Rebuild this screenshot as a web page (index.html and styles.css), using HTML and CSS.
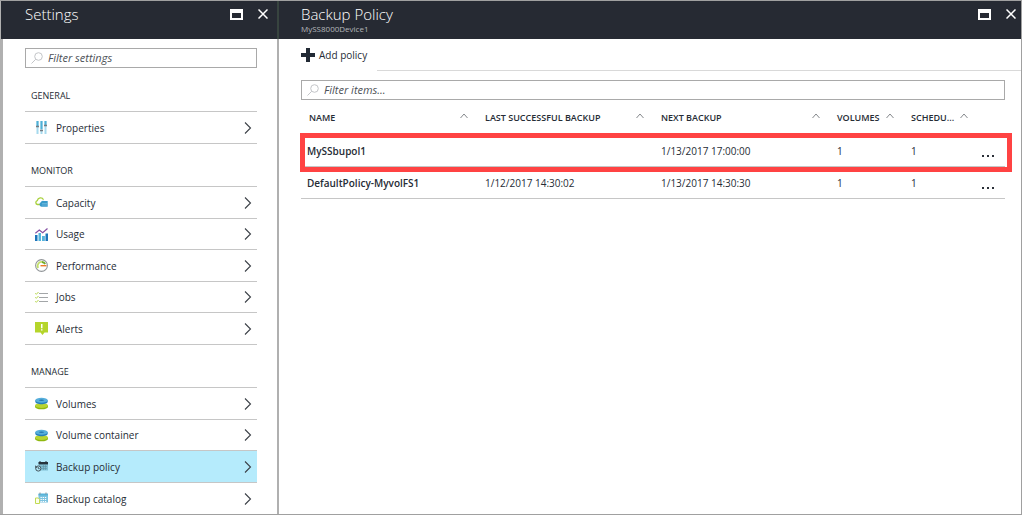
FILE: index.html
```html
<!DOCTYPE html>
<html lang="en">
<head>
<meta charset="utf-8">
<title>Backup Policy</title>
<link rel="stylesheet" href="styles.css">
</head>
<body>
<svg class="sprite" aria-hidden="true">
  <symbol id="chevron" viewBox="0 0 8 12"><path d="M1 .5 6.500 6 1 11.500" fill="none" stroke="#3c4148" stroke-width="1.100"/></symbol>
  <symbol id="sort" viewBox="0 0 8 6"><path d="M.5 5 4 1l3.500 4" fill="none" stroke="#85888c"/></symbol>
  <symbol id="search" viewBox="0 0 12 12"><circle cx="7.500" cy="4.500" r="3.800" fill="none" stroke="#c3c5c8"/><path d="M4.700 7.300.5 11.500" stroke="#c3c5c8"/></symbol>
  <symbol id="restore" viewBox="0 0 13 11"><path d="M0 0h13v11H0zM2 4v5h9V4z" fill="#fff" fill-rule="evenodd"/></symbol>
  <symbol id="close" viewBox="0 0 10 10"><path d="m.5.5 9 9m0-9-9 9" stroke="#fff" stroke-width="1.500"/></symbol>
  <symbol id="disks" viewBox="0 0 13 13">
    <path d="M0 8.500h13v1.200c0 1.500-3 2.600-6.500 2.600S0 11.200 0 9.700z" fill="#8fb80f"/>
    <ellipse cx="6.500" cy="8.600" rx="6.500" ry="2.500" fill="#b8d432"/>
    <path d="M.3 3.200h12.400v1.500c0 1.400-2.800 2.500-6.200 2.500S.3 6.100.3 4.700z" fill="#2580bd"/>
    <ellipse cx="6.500" cy="3.200" rx="6.200" ry="2.500" fill="#56aedb"/>
    <ellipse cx="6.500" cy="3.200" rx="2.500" ry=".8" fill="#2878af"/>
  </symbol>
</svg>
<div class="portal">
  <aside class="blade blade-settings">
    <header class="blade-header">
      <h1 class="title">Settings</h1>
      <div class="window-buttons">
        <button aria-label="Maximize"><svg width="13" height="11"><use href="#restore"/></svg></button>
        <button aria-label="Close"><svg width="10" height="10"><use href="#close"/></svg></button>
      </div>
    </header>
    <div class="settings-body">
      <label class="filter"><svg width="12" height="12"><use href="#search"/></svg><input type="text" placeholder="Filter settings" aria-label="Filter settings"></label>
      <h2 class="group-title">GENERAL</h2>
      <ul class="menu">
        <li><a href="#"><svg class="icon" viewBox="0 0 13 13"><path d="M2.500 0v13M6.500 0v13M10.500 0v13" stroke="#a6daee" stroke-width="2"/><path d="M2.500 0v5M6.500 0v8M10.500 0v4" stroke="#4fb0d6" stroke-width="2"/><path d="M1 5.500h3M5 9.500h3M9 4.500h3" stroke="#747a80" stroke-width="1.500"/></svg><span>Properties</span><svg class="chevron"><use href="#chevron"/></svg></a></li>
      </ul>
      <h2 class="group-title">MONITOR</h2>
      <ul class="menu">
        <li><a href="#"><svg class="icon" viewBox="0 0 13 13"><path d="M5 8.500H2.500A2 2 0 0 1 2.300 4.600 3.300 3.300 0 0 1 8.500 3.800" fill="none" stroke="#a9d13c" stroke-width="1.300"/><path d="M6.500 10.800a2.400 2.400 0 0 1-1-4.300A3 3 0 0 1 9 5h3.700v5.800z" fill="#3a9bcb"/><path d="M7 7.500h5M7 9h5" stroke="#8fcbe6" stroke-width=".5"/></svg><span>Capacity</span><svg class="chevron"><use href="#chevron"/></svg></a></li>
        <li><a href="#"><svg class="icon" viewBox="0 0 13 13"><path d="M0 7h2.500v6H0zM7 8h2.500v5H7z" fill="#1c75bb"/><path d="M3.500 5H6v8H3.500z" fill="#53b5dc"/><path d="M10.500 5.500H13V13h-2.500z" fill="#1c75bb"/><path d="M7 8h2.500v5H7z" fill="#53b5dc"/><path d="m.3 5.200 4-3.200 3.400 2.800L12.500.5" fill="none" stroke="#854fa3" stroke-width="1.200"/></svg><span>Usage</span><svg class="chevron"><use href="#chevron"/></svg></a></li>
        <li><a href="#"><svg class="icon" viewBox="0 0 13 13"><circle cx="6.500" cy="6.500" r="5.900" fill="#fff" stroke="#929699" stroke-width="1.100"/><path d="M3.200 9a4 4 0 0 1 4.300-6" fill="none" stroke="#c2df69" stroke-width="1.800"/><path d="M7 3A4 4 0 0 1 10.200 5" fill="none" stroke="#72ab28" stroke-width="1.800"/><path d="M5.500 6h6v1.400h-6z" fill="#ee7928"/></svg><span>Performance</span><svg class="chevron"><use href="#chevron"/></svg></a></li>
        <li><a href="#"><svg class="icon" viewBox="0 0 13 13"><path d="M4 2.500h9M4 6.500h9M4 10.500h9" stroke="#a3a6a8"/><path d="m.3 2.300 1 1L3.500 1M.3 6.300l1 1L3.500 5M.3 10.300l1 1L3.500 9" fill="none" stroke="#b4d646"/></svg><span>Jobs</span><svg class="chevron"><use href="#chevron"/></svg></a></li>
        <li><a href="#"><svg class="icon" viewBox="0 0 13 13"><path d="M0 0h13v10.500H9.500L7.500 13l-2-2.500H0z" fill="#b5d52b"/><path d="M6 2h1.500v4.200H6zM6 7.200h1.500v1.300H6z" fill="#fff"/></svg><span>Alerts</span><svg class="chevron"><use href="#chevron"/></svg></a></li>
      </ul>
      <h2 class="group-title">MANAGE</h2>
      <ul class="menu">
        <li><a href="#"><svg class="icon"><use href="#disks"/></svg><span>Volumes</span><svg class="chevron"><use href="#chevron"/></svg></a></li>
        <li><a href="#"><svg class="icon"><use href="#disks"/></svg><span>Volume container</span><svg class="chevron"><use href="#chevron"/></svg></a></li>
        <li class="selected"><a href="#" aria-current="page"><svg class="icon" viewBox="0 0 13 13"><path d="M3.500 2H13v8.500H5z" fill="#80bfd4"/><path d="M3.500 2H13v2.400H3.500z" fill="#26333c"/><path d="M5 1v2M11 1v2" stroke="#26333c"/><path d="M6.500 6.500H12M6.500 8.500H12M8.500 5v5M10.500 5v5" stroke="#5d8c9d" stroke-width=".5"/><circle cx="3.300" cy="8.500" r="2.600" fill="#b5ebfb" stroke="#37434a" stroke-width=".9"/><path d="M3.300 7v1.700h1.500M.3 5.500l.3 2 1.900-.5" fill="none" stroke="#37434a" stroke-width=".8"/></svg><span>Backup policy</span><svg class="chevron"><use href="#chevron"/></svg></a></li>
        <li><a href="#"><svg class="icon" viewBox="0 0 13 13"><path d="M3.500 2H13v8.500H3.500z" fill="#7dc3e0"/><path d="M3.500 1.500H13v2H3.500z" fill="#58b4da"/><path d="M5 .5v2M11 .5v2" stroke="#8a9399"/><path d="M5.500 5.500h6.500M5.500 7.500h6.500M5.500 9.500h6.500" stroke="#fff" stroke-dasharray="1.300 .9"/><path d="M.5 6h2.800L4.500 7.300v4.200h-4z" fill="#fbfdeb" stroke="#c1db53"/></svg><span>Backup catalog</span><svg class="chevron"><use href="#chevron"/></svg></a></li>
      </ul>
    </div>
  </aside>
  <main class="blade blade-policy">
    <header class="blade-header">
      <div>
        <h1 class="title">Backup Policy</h1>
        <p class="subtitle">MySS8000Device1</p>
      </div>
      <div class="window-buttons">
        <button aria-label="Maximize"><svg width="13" height="11"><use href="#restore"/></svg></button>
        <button aria-label="Close"><svg width="10" height="10"><use href="#close"/></svg></button>
      </div>
    </header>
    <div class="toolbar">
      <button class="add"><svg width="14" height="14" viewBox="0 0 14 14"><path d="M7 0v14M0 7h14" stroke="#222a35" stroke-width="4"/></svg>Add policy</button>
      <div class="toolbar-line"></div>
    </div>
    <div class="policy-body">
      <label class="filter"><svg width="12" height="12"><use href="#search"/></svg><input type="text" placeholder="Filter items..." aria-label="Filter items"></label>
      <div class="table-wrap">
        <table class="policies">
          <colgroup><col><col><col><col class="narrow"><col class="narrow"><col class="actions"></colgroup>
          <thead>
            <tr>
              <th><div class="head"><span>NAME</span><svg class="sort"><use href="#sort"/></svg></div></th>
              <th><div class="head"><span>LAST SUCCESSFUL BACKUP</span><svg class="sort"><use href="#sort"/></svg></div></th>
              <th><div class="head"><span>NEXT BACKUP</span><svg class="sort"><use href="#sort"/></svg></div></th>
              <th><div class="head"><span>VOLUMES</span><svg class="sort"><use href="#sort"/></svg></div></th>
              <th><div class="head"><span>SCHEDU...</span><svg class="sort"><use href="#sort"/></svg></div></th>
              <th></th>
            </tr>
          </thead>
          <tbody>
            <tr><td class="name">MySSbupol1</td><td></td><td>1/13/2017 17:00:00</td><td>1</td><td>1</td><td class="more"><button aria-label="More actions"><svg width="14" height="3"><path d="M1 0h2v2H1zM6 0h2v2H6zM11 0h2v2h-2z" fill="#2b3038"/></svg></button></td></tr>
            <tr><td class="name">DefaultPolicy-MyvolFS1</td><td>1/12/2017 14:30:02</td><td>1/13/2017 14:30:30</td><td>1</td><td>1</td><td class="more"><button aria-label="More actions"><svg width="14" height="3"><path d="M1 0h2v2H1zM6 0h2v2H6zM11 0h2v2h-2z" fill="#2b3038"/></svg></button></td></tr>
          </tbody>
        </table>
        <div class="callout"></div>
      </div>
    </div>
  </main>
</div>
</body>
</html>
```
FILE: styles.css
```css
* { box-sizing: border-box; }
body {
  margin: 0;
  font: 10px/16px "Open Sans", "Noto Sans", sans-serif;
  color: #262c35;
  background: #fff;
}
h1, h2, p, ul { margin: 0; padding: 0; font-weight: 400; }
ul { list-style: none; }
svg { display: block; flex: none; }
button { padding: 0; border: 0; background: none; font: inherit; color: inherit; }
.sprite { position: absolute; width: 0; height: 0; }

.portal {
  display: flex;
  min-height: 100vh;
  border: 1px solid #a0a0a0;
  border-left-width: 0;
}
.blade-settings { flex: 0 0 279px; border: solid #b0b0b0; border-width: 0 2px 0 3px; }
.blade-policy { flex: 1; min-width: 0; }

.blade-header {
  display: flex;
  justify-content: space-between;
  height: 38px;
  padding: 4px 5px 0 22px;
  background: #262a33;
  color: #fff;
}
.blade-settings .blade-header { margin: 0 -2px; padding: 4px 9px 0 24px; border-right: 2px solid #37443f; }
.title { font-size: 15px; line-height: 19px; font-weight: 300; }
.subtitle { font-size: 8px; line-height: 10px; color: #b4b7bb; }
.window-buttons { display: flex; gap: 15px; height: 18px; align-items: center; }

.settings-body { padding: 9px 20px 0 22px; }
.filter {
  display: flex;
  align-items: center;
  gap: 5px;
  height: 20px;
  padding: 0 5px;
  border: 1px solid #a9a9a9;
}
.filter input {
  flex: 1;
  min-width: 0;
  padding: 0;
  border: 0;
  outline: 0;
  background: none;
  font: italic 11px/16px "Open Sans", "Noto Sans", sans-serif;
}
.filter input::placeholder { color: #4d5157; opacity: 1; }

.group-title { height: 42px; padding: 19px 6px 0; font-size: 9px; line-height: 16px; }
.filter + .group-title { margin-top: 1px; }
.menu { border-top: 1px solid #c6c6c6; }
.menu li { height: 32px; border-bottom: 1px solid #c6c6c6; }
.menu li:nth-child(even) { height: 31px; }
.menu:last-child li:last-child { border-bottom: 0; }
.menu a {
  display: flex;
  align-items: center;
  gap: 8px;
  height: 100%;
  padding: 0 5px 0 10px;
  color: inherit;
  text-decoration: none;
}
.menu span { flex: 1; }
.icon { width: 13px; height: 13px; }
.chevron { width: 8px; height: 12px; }
.selected { background: #b5ebfc; }

.toolbar { display: flex; height: 32px; padding-left: 22px; }
.add { display: flex; align-items: center; gap: 4px; width: 76px; white-space: nowrap; }
.toolbar-line { flex: 1; border-bottom: 1px solid #d9d9d9; }

.policy-body { padding: 9px 16px 0 22px; }
.table-wrap { position: relative; }
.policies { width: 100%; table-layout: fixed; border-collapse: separate; border-spacing: 0; }
.narrow { width: 74px; }
.actions { width: 28px; }
.policies th { height: 35px; padding: 0 9px 0 8px; font-size: 9px; font-weight: 600; text-align: left; }
.head { display: flex; justify-content: space-between; white-space: nowrap; }
.sort { width: 8px; height: 6px; margin-top: 3px; }
.policies td { height: 32px; padding: 0 8px; border-bottom: 1px solid #c6c6c6; white-space: nowrap; }
.policies .name { padding-left: 6px; font-weight: 600; }
.policies .more { padding: 6px 0 0 4px; }
.callout { position: absolute; top: 33px; left: -1px; right: -7px; height: 39px; border: 5px solid #ff4343; pointer-events: none; }
```
